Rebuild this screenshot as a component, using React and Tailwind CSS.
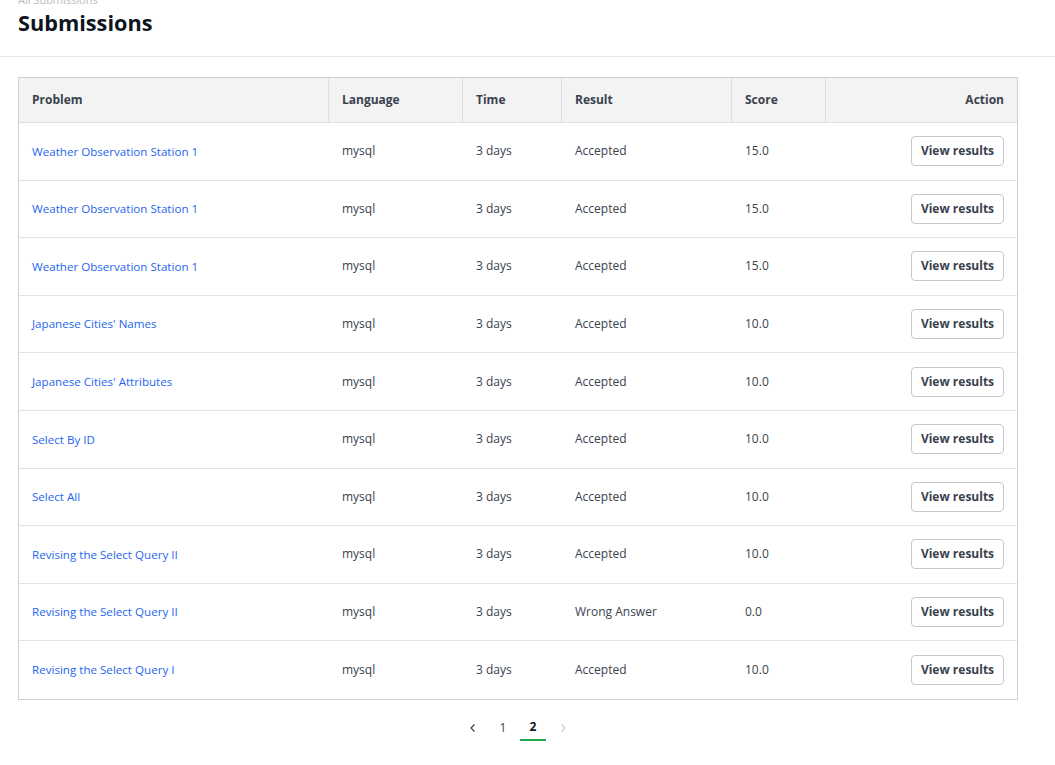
import React from "react";

const rows = [
  ["Weather Observation Station 1", "mysql", "3 days", "Accepted", "15.0"],
  ["Weather Observation Station 1", "mysql", "3 days", "Accepted", "15.0"],
  ["Weather Observation Station 1", "mysql", "3 days", "Accepted", "15.0"],
  ["Japanese Cities' Names", "mysql", "3 days", "Accepted", "10.0"],
  ["Japanese Cities' Attributes", "mysql", "3 days", "Accepted", "10.0"],
  ["Select By ID", "mysql", "3 days", "Accepted", "10.0"],
  ["Select All", "mysql", "3 days", "Accepted", "10.0"],
  ["Revising the Select Query II", "mysql", "3 days", "Accepted", "10.0"],
  ["Revising the Select Query II", "mysql", "3 days", "Wrong Answer", "0.0"],
  ["Revising the Select Query I", "mysql", "3 days", "Accepted", "10.0"],
];

export default function App() {
  return (
    <div className="bg-white min-h-[765px] text-[#39424e]" style={{ fontFamily: '"Open Sans", "Noto Sans", sans-serif' }}>
      <div className="border-b border-[#e6e6e6] h-[57px] px-[18px] overflow-hidden">
        <div className="text-[11px] leading-[14px] text-[#b7bcc4] -mt-[7px]">All Submissions</div>
        <h1 className="text-[21.7px] leading-[30px] font-bold text-[#0e141e] mt-[1px]">Submissions</h1>
      </div>
      <div className="px-[18px] pt-[20px]">
        <div className="w-[1000px] border border-[#cfd0d4]">
          <div className="flex h-[45px] bg-[#f3f3f4] border-b border-[#dfdfe2] text-[12px] font-bold text-[#39424e]">
            <div className="w-[310px] flex items-center px-[13px] border-r border-[#dfdfe2]">Problem</div>
            <div className="w-[134px] flex items-center px-[13px] border-r border-[#dfdfe2]">Language</div>
            <div className="w-[99px] flex items-center px-[13px] border-r border-[#dfdfe2]">Time</div>
            <div className="w-[170px] flex items-center px-[13px] border-r border-[#dfdfe2]">Result</div>
            <div className="w-[94px] flex items-center px-[13px] border-r border-[#dfdfe2]">Score</div>
            <div className="flex-1 flex items-center justify-end px-[13px]">Action</div>
          </div>
          {rows.map((r, i) => (
            <div key={i} className={`flex h-[57.6px] text-[12px] items-center ${i < rows.length - 1 ? "border-b border-[#e3e3e6]" : ""}`}>
              <div className="w-[310px] px-[13px] text-[11.6px] text-[#1f66f0]">{r[0]}</div>
              <div className="w-[134px] px-[13px]">{r[1]}</div>
              <div className="w-[99px] px-[13px]">{r[2]}</div>
              <div className="w-[170px] px-[13px]">{r[3]}</div>
              <div className="w-[94px] px-[13px]">{r[4]}</div>
              <div className="flex-1 flex justify-end px-[13px]">
                <button className="h-[30px] w-[93px] border border-[#c2c7d0] rounded-[4px] bg-white text-[12px] font-bold text-[#39424e]">View results</button>
              </div>
            </div>
          ))}
        </div>
        <div className="flex justify-center items-center mt-[15px] w-[1000px] text-[12px]">
          <div className="w-[30px] h-[26px] flex items-center justify-center text-[#39424e]">
            <svg width="8" height="10" viewBox="0 0 8 10" fill="none" stroke="currentColor" strokeWidth="1.2"><path d="M5.5 1.5 L2 5 L5.5 8.5" /></svg>
          </div>
          <div className="w-[30px] h-[26px] flex items-center justify-center">1</div>
          <div className="w-[26px] h-[26px] flex items-center justify-center font-bold text-[#0e141e] border-b-2 border-[#1ba94c] mx-[2px]">2</div>
          <div className="w-[30px] h-[26px] flex items-center justify-center text-[#c8ccd2]">
            <svg width="8" height="10" viewBox="0 0 8 10" fill="none" stroke="currentColor" strokeWidth="1.2"><path d="M2.5 1.5 L6 5 L2.5 8.5" /></svg>
          </div>
        </div>
      </div>
    </div>
  );
}
